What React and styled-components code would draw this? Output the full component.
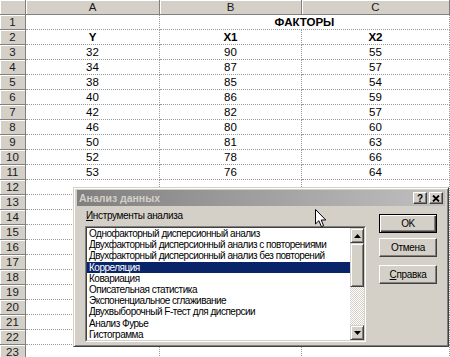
import React from "react";
import styled, { createGlobalStyle, css } from "styled-components";

const Global = createGlobalStyle`
  html, body { margin: 0; padding: 0; background: #fff; overflow: hidden; }
  body { font-family: "Liberation Sans", Arial, sans-serif; }
`;

const Screen = styled.div`
  position: relative;
  width: 450px;
  height: 357px;
  overflow: hidden;
  background: #fff;
`;

const Sheet = styled.div`
  display: grid;
  grid-template-columns: 26px 134px 142px 148px;
  grid-auto-rows: 15px;
  font-family: "Liberation Sans", Arial, sans-serif;
  font-size: 11.5px;
  color: #000;
`;

const HeadCell = styled.div`
  box-sizing: border-box;
  background: #d4d0c8;
  border-right: 1px solid #808080;
  border-bottom: 1px solid #808080;
  box-shadow: inset 1px 1px 0 #fff;
  display: flex;
  align-items: center;
  justify-content: center;
  color: #1a1a1a;
`;

const Cell = styled.div`
  box-sizing: border-box;
  border-right: 1px dotted #9a9a9a;
  border-bottom: 1px dotted #9a9a9a;
  display: flex;
  align-items: center;
  justify-content: center;
  font-weight: ${(p) => (p.$bold ? 700 : 400)};
  grid-column: span ${(p) => p.$span || 1};
`;

const Dialog = styled.div`
  position: absolute;
  left: 73px;
  top: 187px;
  width: 376px;
  height: 160px;
  box-sizing: border-box;
  background: #d4d0c8;
  border: 1px solid;
  border-color: #d4d0c8 #404040 #404040 #d4d0c8;
  box-shadow: inset 1px 1px 0 #fff, inset -1px -1px 0 #808080;
  padding: 2px 3px 3px 3px;
  display: flex;
  flex-direction: column;
  font-family: "Liberation Sans", Arial, sans-serif;
  font-size: 10px;
  letter-spacing: -0.35px;
  color: #000;
`;

const TitleBar = styled.div`
  height: 16px;
  display: flex;
  align-items: center;
  padding: 0 2px;
  background: linear-gradient(to right, #808080, #c0c0c0);
`;

const Title = styled.span`
  flex: 1;
  color: #d4d0c8;
  font-weight: 700;
  font-size: 10.5px;
  letter-spacing: 0;
`;

const TitleButton = styled.div`
  width: 14px;
  height: 12px;
  box-sizing: border-box;
  background: #d4d0c8;
  border: 1px solid;
  border-color: #fff #404040 #404040 #fff;
  box-shadow: inset -1px -1px 0 #808080;
  display: flex;
  align-items: center;
  justify-content: center;
  font-weight: 700;
  font-size: 10px;
  letter-spacing: 0;
  & + & {
    margin-left: 2px;
  }
`;

const Body = styled.div`
  flex: 1;
  display: flex;
  gap: 13px;
  padding: 0 8px;
`;

const LeftPane = styled.div`
  width: 281px;
  display: flex;
  flex-direction: column;
  padding-top: 4px;
`;

const Label = styled.div`
  line-height: 12px;
  padding-left: 1px;
`;

const ListOuter = styled.div`
  margin-top: 4px;
  height: 116px;
  box-sizing: border-box;
  border: 1px solid;
  border-color: #808080 #fff #fff #808080;
`;

const ListInner = styled.div`
  height: 100%;
  box-sizing: border-box;
  border: 1px solid;
  border-color: #404040 #d4d0c8 #d4d0c8 #404040;
  background: #fff;
  display: flex;
`;

const Items = styled.div`
  flex: 1;
  overflow: hidden;
`;

const Item = styled.div`
  height: 11.2px;
  line-height: 11.2px;
  padding-left: 2px;
  white-space: nowrap;
  letter-spacing: -0.5px;
  background: ${(p) => (p.$selected ? "#0a246a" : "transparent")};
  color: ${(p) => (p.$selected ? "#fff" : "#000")};
`;

const ScrollBar = styled.div`
  width: 14px;
  display: flex;
  flex-direction: column;
`;

const raised = css`
  box-sizing: border-box;
  background: #d4d0c8;
  border: 1px solid;
  border-color: #d4d0c8 #404040 #404040 #d4d0c8;
  box-shadow: inset 1px 1px 0 #fff, inset -1px -1px 0 #808080;
`;

const ScrollButton = styled.div`
  ${raised};
  height: 15px;
  display: flex;
  align-items: center;
  justify-content: center;
`;

const Thumb = styled.div`
  ${raised};
  height: 44px;
`;

const Track = styled.div`
  flex: 1;
  background: repeating-conic-gradient(#d4d0c8 0 25%, #fff 0 50%) 0 0 / 2px 2px;
`;

const RightPane = styled.div`
  display: flex;
  flex-direction: column;
  padding-top: 8px;
`;

const Button = styled.div`
  width: 58px;
  height: 19px;
  box-sizing: border-box;
  background: #d4d0c8;
  display: flex;
  align-items: center;
  justify-content: center;
  margin-top: ${(p) => p.$gap || 0}px;
  ${(p) =>
    p.$default
      ? css`
          border: 1px solid #000;
          box-shadow: inset 1px 1px 0 #fff, inset -1px -1px 0 #404040,
            inset -2px -2px 0 #808080;
        `
      : css`
          border: 1px solid;
          border-color: #fff #404040 #404040 #fff;
          box-shadow: inset -1px -1px 0 #808080;
        `}
`;

const Cursor = styled.svg`
  position: absolute;
  left: 315px;
  top: 209px;
`;

const dataRows = [
  [32, 90, 55],
  [34, 87, 57],
  [38, 85, 54],
  [40, 86, 59],
  [42, 82, 57],
  [46, 80, 60],
  [50, 81, 63],
  [52, 78, 66],
  [53, 76, 64],
];

const items = [
  "Однофакторный дисперсионный анализ",
  "Двухфакторный дисперсионный анализ с повторениями",
  "Двухфакторный дисперсионный анализ без повторений",
  "Корреляция",
  "Ковариация",
  "Описательная статистика",
  "Экспоненциальное сглаживание",
  "Двухвыборочный F-тест для дисперсии",
  "Анализ Фурье",
  "Гистограмма",
];

const Arrow = ({ down }) => (
  <svg width="7" height="4" viewBox="0 0 7 4">
    <path d={down ? "M0 0H7L3.5 4Z" : "M3.5 0L7 4H0Z"} fill="#000" />
  </svg>
);

export default function App() {
  const rows = [];
  rows.push(
    <React.Fragment key="r1">
      <HeadCell>1</HeadCell>
      <Cell />
      <Cell $bold $span={2}>ФАКТОРЫ</Cell>
    </React.Fragment>
  );
  rows.push(
    <React.Fragment key="r2">
      <HeadCell>2</HeadCell>
      <Cell $bold>Y</Cell>
      <Cell $bold>X1</Cell>
      <Cell $bold>X2</Cell>
    </React.Fragment>
  );
  dataRows.forEach((r, i) => {
    rows.push(
      <React.Fragment key={"d" + i}>
        <HeadCell>{i + 3}</HeadCell>
        {r.map((v, j) => (
          <Cell key={j}>{v}</Cell>
        ))}
      </React.Fragment>
    );
  });
  for (let n = 12; n <= 23; n++) {
    rows.push(
      <React.Fragment key={"e" + n}>
        <HeadCell>{n}</HeadCell>
        <Cell />
        <Cell />
        <Cell />
      </React.Fragment>
    );
  }

  return (
    <Screen>
      <Global />
      <Sheet>
        <HeadCell />
        <HeadCell>A</HeadCell>
        <HeadCell>B</HeadCell>
        <HeadCell>C</HeadCell>
        {rows}
      </Sheet>

      <Dialog>
        <TitleBar>
          <Title>Анализ данных</Title>
          <TitleButton>?</TitleButton>
          <TitleButton>
            <svg width="8" height="7" viewBox="0 0 8 7">
              <path d="M1 0.5L7 6.5M7 0.5L1 6.5" stroke="#000" strokeWidth="1.8" />
            </svg>
          </TitleButton>
        </TitleBar>
        <Body>
          <LeftPane>
            <Label>
              <u>И</u>нструменты анализа
            </Label>
            <ListOuter>
              <ListInner>
                <Items>
                  {items.map((t, i) => (
                    <Item key={t} $selected={i === 3}>
                      {t}
                    </Item>
                  ))}
                </Items>
                <ScrollBar>
                  <ScrollButton>
                    <Arrow />
                  </ScrollButton>
                  <Thumb />
                  <Track />
                  <ScrollButton>
                    <Arrow down />
                  </ScrollButton>
                </ScrollBar>
              </ListInner>
            </ListOuter>
          </LeftPane>
          <RightPane>
            <Button $default>OK</Button>
            <Button $gap={5}>Отмена</Button>
            <Button $gap={8}>
              <span>
                <u>С</u>правка
              </span>
            </Button>
          </RightPane>
        </Body>
      </Dialog>

      <Cursor width="12" height="19" viewBox="0 0 12 19">
        <path
          d="M0.5 0.5L0.5 15L3.9 11.7L6.4 17.6L8.6 16.7L6.2 11L10.8 11Z"
          fill="#fff"
          stroke="#000"
          strokeWidth="1"
          strokeLinejoin="miter"
        />
      </Cursor>
    </Screen>
  );
}
